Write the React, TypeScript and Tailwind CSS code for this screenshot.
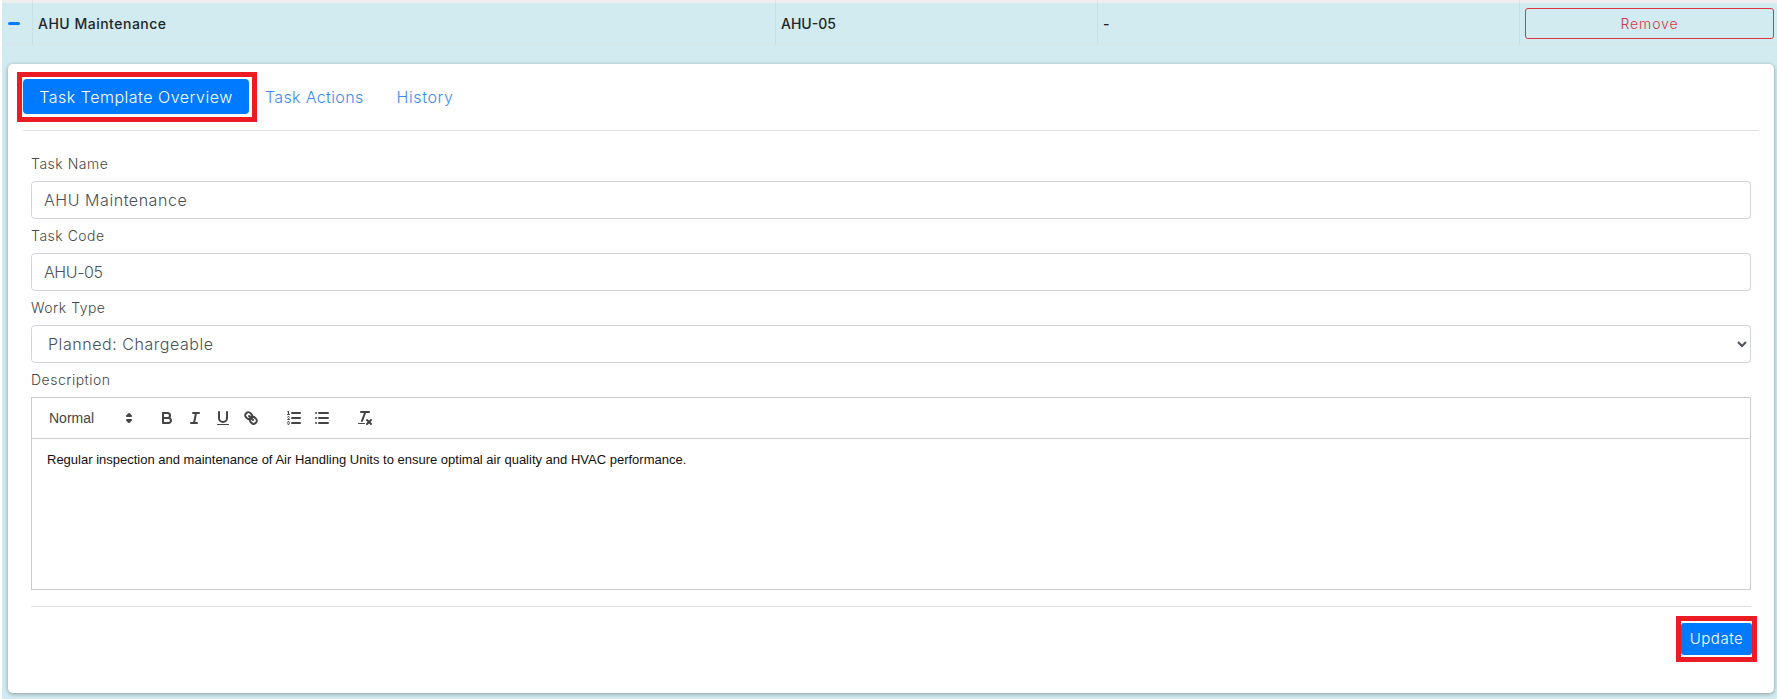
import React from 'react'

const sans = 'font-[Inter,sans-serif]'

function Icon({ children }: { children: React.ReactNode }) {
  return (
    <span className="flex h-6 w-7 items-center justify-center">
      <svg viewBox="0 0 18 18" className="h-[18px] w-[18px] fill-none stroke-[#444] stroke-2 [stroke-linecap:round] [stroke-linejoin:round]">
        {children}
      </svg>
    </span>
  )
}

function Toolbar() {
  return (
    <div className="flex h-[41px] items-center border-b border-[#ccc] px-2 font-['Liberation_Sans',sans-serif] text-sm font-medium text-[#444]">
      {/* header picker */}
      <div className="mr-[15px] flex w-[98px] items-center justify-between pl-[9px]">
        <span>Normal</span>
        <svg viewBox="0 0 18 18" className="h-[18px] w-[18px] fill-none stroke-[#444] stroke-2 [stroke-linejoin:round]">
          <polygon points="7 11 9 13 11 11 7 11" />
          <polygon points="7 7 9 5 11 7 7 7" />
        </svg>
      </div>

      <div className="mr-[15px] flex">
        <Icon>
          <path d="M5,4H9.5A2.5,2.5,0,0,1,12,6.5v0A2.5,2.5,0,0,1,9.5,9H5A0,0,0,0,1,5,9V4A0,0,0,0,1,5,4Z" />
          <path d="M5,9h5.5A2.5,2.5,0,0,1,13,11.5v0A2.5,2.5,0,0,1,10.5,14H5a0,0,0,0,1,0,0V9A0,0,0,0,1,5,9Z" />
        </Icon>
        <Icon>
          <line x1="7" x2="13" y1="4" y2="4" />
          <line x1="5" x2="11" y1="14" y2="14" />
          <line x1="8" x2="10" y1="14" y2="4" />
        </Icon>
        <Icon>
          <path d="M5,3V9a4.012,4.012,0,0,0,4,4H9a4.012,4.012,0,0,0,4-4V3" />
          <rect className="fill-[#444] stroke-0" height="1" rx="0.5" ry="0.5" width="12" x="3" y="15" />
        </Icon>
        <Icon>
          <line x1="7" x2="11" y1="7" y2="11" />
          <path d="M8.9,4.577a3.476,3.476,0,0,1,.36,4.679A3.476,3.476,0,0,1,4.577,8.9C3.185,7.5,2.035,6.4,4.217,4.217S7.5,3.185,8.9,4.577Z" />
          <path d="M13.423,9.1a3.476,3.476,0,0,0-4.679-.36,3.476,3.476,0,0,0,.36,4.679c1.392,1.392,2.5,2.542,4.679.36S14.815,10.5,13.423,9.1Z" />
        </Icon>
      </div>

      <div className="mr-[15px] flex">
        <Icon>
          <line x1="7" x2="15" y1="4" y2="4" />
          <line x1="7" x2="15" y1="9" y2="9" />
          <line x1="7" x2="15" y1="14" y2="14" />
          <line className="stroke-1" x1="2.5" x2="4.5" y1="5.5" y2="5.5" />
          <path className="fill-[#444] stroke-0" d="M3.5,6A0.5,0.5,0,0,1,3,5.5V3.085l-0.276.138A0.5,0.5,0,0,1,2.053,3c-0.124-.247-0.023-0.324.224-0.447l1-.5A0.5,0.5,0,0,1,4,2.5v3A0.5,0.5,0,0,1,3.5,6Z" />
          <path className="stroke-1" d="M4.5,10.5h-2c0-.234,1.85-1.076,1.85-2.234A0.959,0.959,0,0,0,2.5,8.156" />
          <path className="stroke-1" d="M2.5,14.846a0.959,0.959,0,0,0,1.85-.109A0.7,0.7,0,0,0,3.75,14a0.688,0.688,0,0,0,.6-0.736,0.959,0.959,0,0,0-1.85-.109" />
        </Icon>
        <Icon>
          <line x1="6" x2="15" y1="4" y2="4" />
          <line x1="6" x2="15" y1="9" y2="9" />
          <line x1="6" x2="15" y1="14" y2="14" />
          <line x1="3" x2="3" y1="4" y2="4" />
          <line x1="3" x2="3" y1="9" y2="9" />
          <line x1="3" x2="3" y1="14" y2="14" />
        </Icon>
      </div>

      <div className="flex">
        <Icon>
          <line x1="5" x2="13" y1="3" y2="3" />
          <line x1="6" x2="9.35" y1="12" y2="3" />
          <line x1="11" x2="15" y1="11" y2="15" />
          <line x1="15" x2="11" y1="11" y2="15" />
          <rect className="fill-[#444] stroke-0" height="1" rx="0.5" ry="0.5" width="7" x="2" y="14" />
        </Icon>
      </div>
    </div>
  )
}

function FieldLabel({ children }: { children: React.ReactNode }) {
  return <div className="flex h-[34px] items-center text-sm font-[350] tracking-[0.5px] text-[#474747]">{children}</div>
}

export default function App() {
  return (
    <div className={`h-[699px] w-full overflow-hidden bg-white pl-[2px] ${sans}`}>
      {/* table row */}
      <div className="flex h-[3px] bg-[#eeeeee]">
        <div className="w-[31px] border-r border-[#dee2e6]" />
        <div className="w-[743px] border-r border-[#dee2e6]" />
        <div className="w-[322px] border-r border-[#dee2e6]" />
        <div className="w-[422px] border-r border-[#dee2e6]" />
      </div>
      <div className="flex h-[42px] items-center border-b border-[#dee2e6] bg-[#d1ebf0] text-sm font-[450] text-[#212529]">
        <div className="flex h-full w-[31px] shrink-0 items-center border-r border-[#c6e0e4] pl-[6px]">
          <span className="h-[3px] w-[12px] rounded-sm bg-[#007bff]" />
        </div>
        <div className="flex h-full w-[743px] shrink-0 items-center border-r border-[#c6e0e4] pl-[5px] tracking-[0.5px]">AHU Maintenance</div>
        <div className="flex h-full w-[322px] shrink-0 items-center border-r border-[#c6e0e4] pl-[5px]">AHU-05</div>
        <div className="flex h-full w-[422px] shrink-0 items-center border-r border-[#c6e0e4] pl-[5px]">-</div>
        <div className="flex h-full flex-1 items-center pl-[5px] pr-[3px]">
          <button className="h-[31px] w-[249px] rounded-[3px] border border-[#dc3545] text-sm font-light tracking-[0.9px] text-[#dc3545]">
            Remove
          </button>
        </div>
      </div>

      {/* expanded panel */}
      <div className="h-[654px] bg-[#d1ebf0] pb-[6px] pl-[6px] pr-[3px] pt-[19px]">
        <div className="h-[629px] rounded-[5px] bg-white pl-[15px] pr-[15px] pt-[15px] shadow-[0_1px_4px_rgba(0,0,0,0.35)]">
          <div className="flex items-center text-base font-[350] text-[#3b8bf5]">
            <button className="relative h-[35px] w-[226px] rounded-[4px] bg-[#007bff] tracking-[0.5px] text-white">
              Task Template Overview
              <span className="pointer-events-none absolute -bottom-[8px] -left-[6px] -right-[8px] -top-[7px] border-[5px] border-[#ed1c24]" />
            </button>
            <span className="ml-[16px] tracking-[0.35px]">Task Actions</span>
            <span className="ml-[33px] tracking-[0.6px]">History</span>
          </div>
          <div className="mt-4 border-b border-[#e3e3e3]" />

          <div className="pl-2 pr-2 pt-4">
            <FieldLabel>Task Name</FieldLabel>
            <input readOnly value="AHU Maintenance" className="block h-[38px] w-full rounded-[4px] border border-[#ced4da] px-[12px] text-base font-[350] tracking-[0.55px] text-[#495057]" />
            <FieldLabel>Task Code</FieldLabel>
            <input readOnly value="AHU-05" className="block h-[38px] w-full rounded-[4px] border border-[#ced4da] px-[12px] text-base font-[350] tracking-[-0.4px] text-[#495057]" />
            <FieldLabel>Work Type</FieldLabel>
            <select className="block h-[38px] w-full rounded-[4px] border border-[#ced4da] bg-white px-[12px] text-base font-[350] tracking-[0.55px] text-[#495057]">
              <option>Planned: Chargeable</option>
            </select>
            <FieldLabel>Description</FieldLabel>
            <div className="h-[193px] border border-[#ccc]">
              <Toolbar />
              <p className="px-[15px] py-3 font-['Liberation_Sans',sans-serif] text-[13px] leading-[18.5px] text-[#111]">
                Regular inspection and maintenance of Air Handling Units to ensure optimal air quality and HVAC performance.
              </p>
            </div>
            <div className="mt-4 border-b border-[#e3e3e3]" />
            <div className="flex justify-end pt-4">
              <button className="relative -mr-px h-[32px] w-[71px] rounded-[3px] bg-[#007bff] text-[15px] font-[350] tracking-[0.5px] text-white">
                Update
                <span className="pointer-events-none absolute -inset-x-[5px] -inset-y-[7px] border-[5px] border-[#ed1c24]" />
              </button>
            </div>
          </div>
        </div>
      </div>
    </div>
  )
}
